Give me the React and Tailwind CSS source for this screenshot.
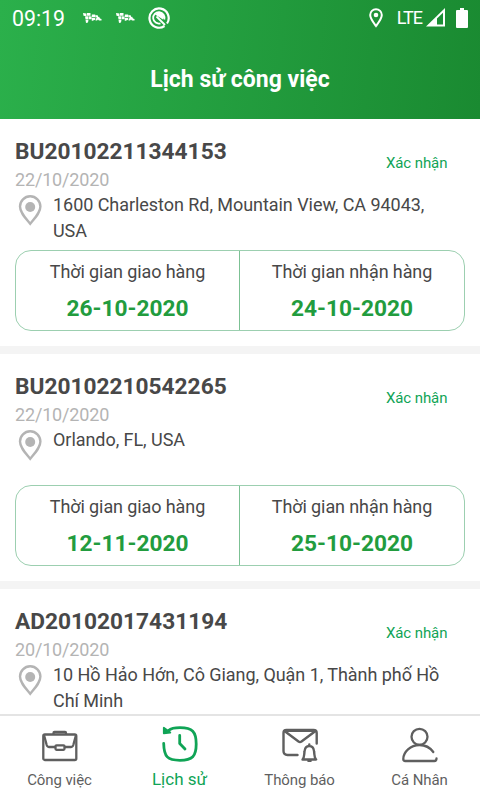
import React, { useState } from "react";

const jobs = [
    {
        id: "BU20102211344153",
        date: "22/10/2020",
        status: "Xác nhận",
        address: "1600 Charleston Rd, Mountain View, CA 94043, USA",
        delivery: "26-10-2020",
        pickup: "24-10-2020",
    },
    {
        id: "BU20102210542265",
        date: "22/10/2020",
        status: "Xác nhận",
        address: "Orlando, FL, USA",
        delivery: "12-11-2020",
        pickup: "25-10-2020",
    },
    {
        id: "AD20102017431194",
        date: "20/10/2020",
        status: "Xác nhận",
        address: "10 Hồ Hảo Hớn, Cô Giang, Quận 1, Thành phố Hồ Chí Minh",
    },
];

const App = () => {
    const [tab, setTab] = useState("history");

    return (
        <div className="flex h-[800px] w-[480px] flex-col overflow-hidden bg-white font-['Roboto',sans-serif] text-[#484848]">
            <header className="h-[119px] shrink-0 bg-linear-[96deg] from-[#2bb04b] to-[#1a8a31] text-white">
                <StatusBar />
                <h1 className="mt-[26px] text-center text-[23px] leading-[36px] font-bold">Lịch sử công việc</h1>
            </header>
            <main className="min-h-0 flex-1 overflow-hidden">
                {jobs.map(job => <Job key={job.id} {...job} />)}
            </main>
            <nav className="grid h-[86px] shrink-0 grid-cols-4 border-t-2 border-[#e4e4e4] bg-white">
                <Tab label="Công việc" icon={<BriefcaseIcon />} active={tab === "jobs"} onClick={() => setTab("jobs")} />
                <Tab label="Lịch sử" icon={<HistoryIcon />} active={tab === "history"} onClick={() => setTab("history")} />
                <Tab label="Thông báo" icon={<MailIcon />} active={tab === "mail"} onClick={() => setTab("mail")} />
                <Tab label="Cá Nhân" icon={<UserIcon />} active={tab === "user"} onClick={() => setTab("user")} />
            </nav>
        </div>
    )
}

const StatusBar = () => (
    <div className="flex h-9 items-center px-3">
        <span className="w-[70px] pt-[2px] text-[21.3px] leading-none">09:19</span>
        <FlagIcon />
        <FlagIcon />
        <AppIcon />
        <svg className="ml-auto" width="14" height="20" viewBox="0 0 14 20">
            <path d="M7 18C4 14 1.2 10.500 1.200 7a5.800 5.800 0 0 1 11.600 0C12.800 10.500 10 14 7 18z" fill="none" stroke="currentColor" strokeWidth="2" />
            <circle cx="7" cy="7" r="2.300" fill="currentColor" />
        </svg>
        <span className="ml-[14px] text-[18px] leading-none tracking-[-1px]">LTE</span>
        <svg className="ml-1" width="20" height="20" viewBox="0 0 20 20">
            <path d="M0 18.500L19 0v18.500z" fill="currentColor" />
            <path d="M11 10.500L17 4.700V16.500h-6z" fill="#1c8f35" />
        </svg>
        <svg className="ml-[10px]" width="12" height="20" viewBox="0 0 12 20">
            <path d="M4 0h4v2h3q1 0 1 1v16q0 1-1 1H1q-1 0-1-1V3q0-1 1-1h3z" fill="currentColor" />
        </svg>
    </div>
)

const Job = ({ id, date, status, address, delivery, pickup }) => (
    <section className="h-[235px] border-b-8 border-[#f4f4f4] px-[15px] pt-[18px]">
        <div className="flex h-[55px]">
            <div className="flex-1">
                <h2 className="text-[22.7px] leading-[29px] font-bold">{id}</h2>
                <p className="pt-px text-[18px] leading-[26px] tracking-[-0.17px] text-[#b4b4b4]">{date}</p>
            </div>
            <span className="w-[79px] pt-[14px] text-[15px] leading-[24px] tracking-[-0.1px] text-[#10a456]">{status}</span>
        </div>
        <div className="flex h-[58px]">
            <PinIcon />
            <p className="flex-1 pr-4 text-[18px] leading-[26px] tracking-[-0.05px]">{address}</p>
        </div>
        {delivery && (
            <div className="flex h-[81px] rounded-[16px] border border-[#9ccfb0]">
                <Time label="Thời gian giao hàng" value={delivery} />
                <Time label="Thời gian nhận hàng" value={pickup} />
            </div>
        )}
    </section>
)

const Time = ({ label, value }) => (
    <div className="w-[224px] border-[#7cc194] pt-[7px] text-center first:border-r">
        <p className="text-[18px] leading-[28px] tracking-[-0.1px]">{label}</p>
        <p className="pt-[8px] text-[22.7px] leading-[30px] font-bold text-[#229c3e]">{value}</p>
    </div>
)

const Tab = ({ label, icon, active, onClick }) => (
    <button onClick={onClick} className={`flex flex-col items-center pt-[10px] ${active ? "text-[#10a456]" : "text-[#5f5f5f]"}`}>
        {icon}
        <span className={`pr-px leading-[24px] ${active ? "pt-[5px] text-[17px]" : "pt-[6px] text-[15px] tracking-[-0.1px]"}`}>{label}</span>
    </button>
)

const PinIcon = () => (
    <svg className="mr-[7px]" width="31" height="36" viewBox="0 0 31 36">
        <path d="M15.200 31.800C10 25.500 5 20.500 5 14.500a10.200 10.200 0 0 1 20.400 0C25.400 20.500 20.400 25.500 15.200 31.800z" fill="none" stroke="#b4b4b4" strokeWidth="2.400" />
        <circle cx="15.200" cy="15" r="5" fill="#b4b4b4" />
    </svg>
)

const FlagIcon = () => (
    <svg className="mr-[13px]" width="20" height="12" viewBox="0 0 20 12" fill="currentColor">
        <path d="M1 1l3.500.500v2.700l-3-.500zM5 1h3.500v2.700H5zM3 4.500l3-.200v3H3.500zM6.500 4.200l3 .300v2.800h-3zM3.500 7.800h3L6 10.500l-2 .500zM9.800 2.500h3.400V5H9.800zM13.500 3l2.500.500v2h-2.500zM9.800 5.700h3.400v2L9.800 9zM14 6.500l3-2 1 2 1.500.500v1.500h-2.500l-1-1-1 1h-1.500z" />
    </svg>
)

const AppIcon = () => (
    <svg width="22" height="22" viewBox="0 0 22 22" fill="none" stroke="currentColor" strokeWidth="2.200">
        <path d="M16.500 19A9.600 9.600 0 1 1 19 16.500" />
        <path d="M12.500 16.300A5.700 5.700 0 1 1 16.300 12.500" strokeWidth="1.800" />
        <path d="M7 7.500q2-2.500 5-2t4.500 4l-1.500 3z" fill="currentColor" stroke="none" />
        <path d="M8.500 9.500l8.500 8.500" strokeWidth="1.800" />
    </svg>
)

const BriefcaseIcon = () => (
    <svg width="36" height="36" viewBox="0 0 36 36" fill="none" stroke="currentColor" strokeWidth="2.300" strokeLinejoin="round">
        <rect x="1.300" y="8.500" width="33" height="25.500" rx="1.500" />
        <path d="M11.500 8V7q0-1 1-1h10.500q1 0 1 1v1" />
        <path d="M2 9l2.700 10q.600 2 2.600 2H13M34 9l-2.700 10q-.600 2-2.600 2H23" />
        <rect x="13.500" y="19.300" width="9" height="4.500" rx="1" />
    </svg>
)

const HistoryIcon = () => (
    <svg width="36" height="36" viewBox="0 0 36 36" fill="none" stroke="currentColor" strokeWidth="2.800" strokeLinecap="round" strokeLinejoin="round">
        <path d="M6.500 4.500C9.500 2 13 1.700 18 1.700c12.500 0 16.200 4 16.200 16.300S30.500 34.300 18 34.300 2 30.800 1.700 17.500" />
        <path d="M1.800 1.800v5.500l6.500-.800z" fill="currentColor" strokeWidth="1.800" />
        <path d="M17.700 9.500v8l5.300 5.500" />
    </svg>
)

const MailIcon = () => (
    <svg width="36" height="36" viewBox="0 0 36 36" fill="none" stroke="currentColor" strokeWidth="2.400" strokeLinecap="round" strokeLinejoin="round">
        <path d="M15.500 29H5.500q-4 0-4-4V7q0-3 3-3h27q3.200 0 3.200 3v10.500" />
        <path d="M2.500 5l14 10.500q1.500 1 3 0L33.500 5M4 4.700h28" />
        <path d="M20.500 33.500c2-2 1.500-4 2-8 .300-3.500 2-5.500 4.800-5.500s4.500 2 4.800 5.500c.500 4 0 6 2 8zM27.300 19.500v-1M26.500 35h2" />
    </svg>
)

const UserIcon = () => (
    <svg width="36" height="37" viewBox="0 0 36 37" className="-mb-px" fill="none" stroke="currentColor" strokeWidth="2.300" strokeLinecap="round" strokeLinejoin="round">
        <circle cx="17.500" cy="10.800" r="8" />
        <path d="M31.300 26C28 21.500 23 19 17.500 19 8.500 19 1.300 26 1.300 33q0 2 2 2h29q2.200 0 2.200-2.500" />
    </svg>
)

export default App;
